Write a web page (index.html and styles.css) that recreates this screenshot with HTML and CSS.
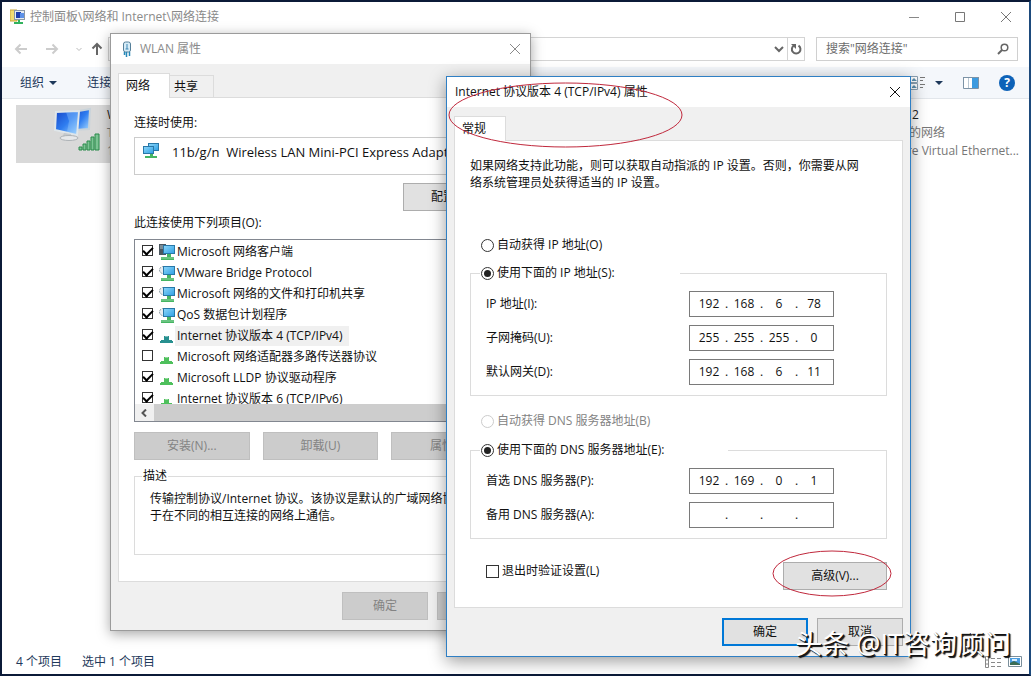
FILE: index.html
```html
<!DOCTYPE html>
<html lang="zh-CN">
<head>
<meta charset="UTF-8" />
<meta name="viewport" content="width=device-width, initial-scale=1" />
<title>网络连接</title>
<link rel="stylesheet" href="styles.css">
</head>
<body>
  <svg class="sprite" aria-hidden="true">
    <defs>
      <linearGradient id="screen" x1="0" y1="0" x2="1" y2="1">
        <stop offset="0" stop-color="#8fd8fb" />
        <stop offset="1" stop-color="#2d9fe3" />
      </linearGradient>
      <linearGradient id="blue" x1="0" y1="0" x2="1" y2="1">
        <stop offset="0" stop-color="#1746c8" />
        <stop offset=".5" stop-color="#2f7df0" />
        <stop offset="1" stop-color="#a9dcff" />
      </linearGradient>
    </defs>
    <symbol id="client" viewBox="0 0 16 16">
      <rect x="0" y="0" width="7" height="11" fill="#4a565e" />
      <path d="M1 2h3M1 4h3" stroke="#a9c3cf" />
      <rect x="4.5" y="1.5" width="11" height="8" fill="url(#screen)" stroke="#2878a8" />
      <path d="M8 10h4v3h3v3H2v-3h6z" fill="#45b562" />
      <path d="M2 14h13" stroke="#8fd3a0" />
    </symbol>
    <symbol id="service" viewBox="0 0 16 16">
      <circle cx="4" cy="5" r="3.5" fill="#e8edf0" stroke="#8c9aa3" stroke-dasharray="2 1" />
      <rect x="4.5" y="1.5" width="11" height="8" fill="url(#screen)" stroke="#2878a8" />
      <path d="M8 10h4v3h3v3H2v-3h6z" fill="#45b562" />
      <path d="M2 14h13" stroke="#8fd3a0" />
    </symbol>
    <symbol id="protocol" viewBox="0 0 16 16">
      <path d="M5 8h5v4h3v3H2v-3h3z" fill="currentColor" />
      <path d="M1 14h13" stroke="currentColor" stroke-width="2" />
      <path d="M6 8.500h3" stroke="#fff" stroke-opacity=".4" />
    </symbol>
    <symbol id="cross" viewBox="0 0 12 12">
      <path d="M1 1l10 10M11 1L1 11" fill="none" stroke="currentColor" />
    </symbol>
    <symbol id="monitors" viewBox="0 0 48 46">
      <path d="M20 6l17-3-1 20-14 1z" fill="url(#blue)" stroke="#c9d3da" stroke-width="2" />
      <path d="M3 6l23-1-2 24-22-5z" fill="url(#blue)" stroke="#dfe6ea" stroke-width="2" />
      <path d="M13 6l3 9-2 11 9 2 2-22z" fill="#9fd0ff" fill-opacity=".35" />
      <path d="M11 27l7 1v4H9z" fill="#c3c8cc" />
      <ellipse cx="16" cy="32" rx="9" ry="2.500" fill="#e6e8ea" stroke="#aeb3b7" />
      <path d="M26 41h3v3h-3zM30 38h3v6h-3zM34 35h3v9h-3zM38 31h3v13h-3zM42 28h4v16h-4z" fill="#7cc494" stroke="#2b8a4b" />
    </symbol>
  </svg>

  <main class="explorer">
    <header class="titlebar">
      <svg class="icon" viewBox="0 0 16 16">
        <path d="M0 1h7v11H0z" fill="#f2dc72" stroke="#c9a63a" />
        <rect x="4.500" y="1.500" width="10" height="9" fill="#e6edf2" stroke="#8c98a5" />
        <path d="M6 3h5v6H6z" fill="#1f3fae" /><path d="M10 4h4v5h-4z" fill="#5d91e8" />
        <path d="M8 11h2v2h3v2H4v-2h4z" fill="#31b35d" />
      </svg>
      <span class="caption">控制面板\网络和 Internet\网络连接</span>
      <div class="window-buttons">
        <button type="button" aria-label="最小化"><svg viewBox="0 0 12 12"><path d="M1 6.500h10" stroke="#888" /></svg></button>
        <button type="button" aria-label="最大化"><svg viewBox="0 0 12 12"><path d="M1.500 1.500h9v9h-9z" fill="none" stroke="#777" /></svg></button>
        <button type="button" aria-label="关闭"><svg><use href="#cross" /></svg></button>
      </div>
    </header>

    <nav class="navbar">
      <div class="history">
        <button type="button" aria-label="后退"><svg class="icon light" viewBox="0 0 16 16"><path d="M14 8H3M7.500 3.500L3 8l4.500 4.500" /></svg></button>
        <button type="button" aria-label="前进"><svg class="icon light" viewBox="0 0 16 16"><path d="M2 8h11M8.500 3.500L13 8l-4.500 4.500" /></svg></button>
        <button type="button" class="narrow" aria-label="最近位置"><svg viewBox="0 0 8 8"><path d="M1.500 3L4 5.500 6.500 3" fill="none" stroke="#bbb" /></svg></button>
        <button type="button" aria-label="上移"><svg class="icon dark" viewBox="0 0 16 16"><path d="M8 14V3M3.500 7.500L8 3l4.500 4.500" /></svg></button>
      </div>
      <div class="address">
        <button type="button" aria-label="以前的位置"><svg viewBox="0 0 12 12"><path d="M2 4l4 4 4-4" fill="none" stroke="#666" stroke-width="2" /></svg></button>
        <button type="button" class="refresh" aria-label="刷新"><svg viewBox="0 0 12 12"><path d="M4 2.500A4.300 4.300 0 1 0 8.500 2.600" fill="none" stroke="#666" stroke-width="2" /><path d="M1 1h5v5z" fill="#666" /></svg></button>
      </div>
      <div class="search">
        <input type="text" aria-label="搜索" placeholder='搜索"网络连接"'>
        <svg viewBox="0 0 12 12"><circle cx="7.500" cy="4.500" r="3.300" fill="none" stroke="#666" stroke-width="1.500" /><path d="M5 7L1 11" stroke="#666" stroke-width="2" /></svg>
      </div>
    </nav>

    <div class="toolbar">
      <button type="button">组织 <svg class="caret" viewBox="0 0 8 4"><path d="M0 0h8L4 4z" /></svg></button>
      <button type="button">连接到</button>
      <div class="tools">
        <button type="button" aria-label="更改视图">
          <svg class="icon" viewBox="0 0 16 16"><path d="M.5 1.500h7v6h-7zM.5 8.500h7v6h-7z" fill="#fff" stroke="#8aa0b2" /><path d="M2 5l2-2 3 3H2zM2 12l2-2 3 3H2z" fill="#5c8fae" /><path d="M10 2.500h5M10 5.500h3M10 9.500h5M10 12.500h3" stroke="#777" /></svg>
          <svg class="caret" viewBox="0 0 8 4"><path d="M0 0h8L4 4z" /></svg>
        </button>
        <button type="button" aria-label="预览窗格"><svg class="icon" viewBox="0 0 16 16"><path d="M.5 2.500h15v11H.5z" fill="#fff" stroke="#7c93a6" /><path d="M5.500 3v10" stroke="#b9c7d2" /><path d="M9 3h6v10H9z" fill="#3d9be0" /><path d="M0 2.500h16" stroke="#7c93a6" /></svg></button>
        <button type="button" class="help" aria-label="帮助">?</button>
      </div>
    </div>

    <section class="connections">
      <article class="connection selected">
        <svg><use href="#monitors" /></svg>
        <div><strong>WLAN</strong><span>TP-LINK</span><span>11b/g/n</span></div>
      </article>
      <article class="connection">
        <svg><use href="#monitors" /></svg>
        <div><strong>以太网 2</strong><span>未识别的网络</span><span>VMware Virtual Ethernet...</span></div>
      </article>
    </section>

    <footer class="statusbar">
      <span>4 个项目</span>
      <span>选中 1 个项目</span>
      <svg class="icon details" viewBox="0 0 16 16"><path d="M.5 2.500h3v11h-3zM.5 6h3M.5 10h3" fill="none" stroke="#888" /><path d="M6 4.500h4M12 4.500h4M6 8.500h4M12 8.500h4M6 12.500h4M12 12.500h4" stroke="#888" /></svg>
      <svg class="icon" viewBox="0 0 16 16"><path d="M1.500 2.500h13v10h-13z" fill="#fff" stroke="#7b8f9b" /><path d="M3 4h10v7H3z" fill="#4a9de0" /><path d="M3 11V9l4-2 6 3v1z" fill="#3b6d55" /><path d="M5 6h5" stroke="#d9eeff" stroke-width="2" /></svg>
    </footer>
  </main>

  <section class="window wlan">
    <header class="window-title">
      <svg class="icon" viewBox="0 0 16 16"><rect x="4.500" y="1" width="7" height="10" rx="2" fill="#d7ecf7" stroke="#557f99" /><path d="M8 3v5M6.500 8h3" stroke="#3c87b5" /><path d="M5.500 11v3M7.500 11v5M10.500 11v4" fill="none" stroke="#2688b8" stroke-width="1.500" /></svg>
      <h2>WLAN 属性</h2>
      <button type="button" aria-label="关闭"><svg><use href="#cross" /></svg></button>
    </header>
    <div class="tabs">
      <button type="button" class="tab active">网络</button>
      <button type="button" class="tab">共享</button>
    </div>
    <form class="panel">
      <p>连接时使用:</p>
      <div class="adapter">
        <svg class="icon" viewBox="0 0 16 16"><rect x="5.500" y=".5" width="10" height="7" fill="url(#screen)" stroke="#2878a8" /><rect x=".5" y="3.500" width="10" height="7" fill="url(#screen)" stroke="#2878a8" /><path d="M7 11h3v2h4v2H2v-2h5z" fill="#45b562" /></svg>
        <span>11b/g/n&nbsp; Wireless LAN Mini-PCI Express Adapter</span>
      </div>
      <button type="button" class="button configure">配置(C)...</button>
      <p>此连接使用下列项目(O):</p>
      <div class="component-list">
        <div class="components">
          <label><input type="checkbox" checked><svg class="icon"><use href="#client" /></svg><span>Microsoft 网络客户端</span></label>
          <label><input type="checkbox" checked><svg class="icon"><use href="#service" /></svg><span>VMware Bridge Protocol</span></label>
          <label><input type="checkbox" checked><svg class="icon"><use href="#service" /></svg><span>Microsoft 网络的文件和打印机共享</span></label>
          <label><input type="checkbox" checked><svg class="icon"><use href="#service" /></svg><span>QoS 数据包计划程序</span></label>
          <label class="current"><input type="checkbox" checked><svg class="icon"><use href="#protocol" /></svg><span>Internet 协议版本 4 (TCP/IPv4)</span></label>
          <label><input type="checkbox"><svg class="icon"><use href="#protocol" /></svg><span>Microsoft 网络适配器多路传送器协议</span></label>
          <label><input type="checkbox" checked><svg class="icon"><use href="#protocol" /></svg><span>Microsoft LLDP 协议驱动程序</span></label>
          <label><input type="checkbox" checked><svg class="icon"><use href="#protocol" /></svg><span>Internet 协议版本 6 (TCP/IPv6)</span></label>
        </div>
        <div class="scrollbar"><svg viewBox="0 0 8 8"><path d="M6 .5L2.500 4 6 7.500" fill="none" stroke="#555" stroke-width="2" /></svg><i></i></div>
      </div>
      <div class="actions">
        <button type="button" class="button" disabled>安装(N)...</button>
        <button type="button" class="button" disabled>卸载(U)</button>
        <button type="button" class="button" disabled>属性(R)</button>
      </div>
      <fieldset class="description">
        <legend>描述</legend>
        <p>传输控制协议/Internet 协议。该协议是默认的广域网络协议，用<br>于在不同的相互连接的网络上通信。</p>
      </fieldset>
    </form>
    <div class="dialog-buttons">
      <button type="button" class="button" disabled>确定</button>
      <button type="button" class="button" disabled>取消</button>
    </div>
  </section>

  <section class="window ipv4">
    <header class="window-title">
      <h2>Internet 协议版本 4 (TCP/IPv4) 属性</h2>
      <button type="button" aria-label="关闭"><svg><use href="#cross" /></svg></button>
    </header>
    <div class="tabs">
      <button type="button" class="tab active">常规</button>
    </div>
    <form class="panel">
      <p class="intro">如果网络支持此功能，则可以获取自动指派的 IP 设置。否则，你需要从网<br>络系统管理员处获得适当的 IP 设置。</p>

      <label class="choice"><input type="radio" name="ip"><span>自动获得 IP 地址(O)</span></label>
      <fieldset class="addresses">
        <legend><label><input type="radio" name="ip" checked><span>使用下面的 IP 地址(S):</span></label></legend>
        <div class="row">
          <label for="ip1">IP 地址(I):</label>
          <div class="octets"><input type="text" id="ip1" value="192"><b>.</b><input type="text" aria-label="IP 地址 2" value="168"><b>.</b><input type="text" aria-label="IP 地址 3" value="6"><b>.</b><input type="text" aria-label="IP 地址 4" value="78"></div>
        </div>
        <div class="row">
          <label for="mask1">子网掩码(U):</label>
          <div class="octets"><input type="text" id="mask1" value="255"><b>.</b><input type="text" aria-label="子网掩码 2" value="255"><b>.</b><input type="text" aria-label="子网掩码 3" value="255"><b>.</b><input type="text" aria-label="子网掩码 4" value="0"></div>
        </div>
        <div class="row">
          <label for="gate1">默认网关(D):</label>
          <div class="octets"><input type="text" id="gate1" value="192"><b>.</b><input type="text" aria-label="默认网关 2" value="168"><b>.</b><input type="text" aria-label="默认网关 3" value="6"><b>.</b><input type="text" aria-label="默认网关 4" value="11"></div>
        </div>
      </fieldset>

      <label class="choice second"><input type="radio" name="dns" disabled><span>自动获得 DNS 服务器地址(B)</span></label>
      <fieldset class="addresses dns">
        <legend><label><input type="radio" name="dns" checked><span>使用下面的 DNS 服务器地址(E):</span></label></legend>
        <div class="row">
          <label for="dns1">首选 DNS 服务器(P):</label>
          <div class="octets"><input type="text" id="dns1" value="192"><b>.</b><input type="text" aria-label="首选 DNS 2" value="169"><b>.</b><input type="text" aria-label="首选 DNS 3" value="0"><b>.</b><input type="text" aria-label="首选 DNS 4" value="1"></div>
        </div>
        <div class="row">
          <label for="alt1">备用 DNS 服务器(A):</label>
          <div class="octets"><input type="text" id="alt1"><b>.</b><input type="text" aria-label="备用 DNS 2"><b>.</b><input type="text" aria-label="备用 DNS 3"><b>.</b><input type="text" aria-label="备用 DNS 4"></div>
        </div>
      </fieldset>

      <div class="advanced">
        <label><input type="checkbox"><span>退出时验证设置(L)</span></label>
        <div class="marked">
          <button type="button" class="button">高级(V)...</button>
          <svg class="ring small" viewBox="0 0 120 47"><ellipse cx="60" cy="23.500" rx="59" ry="22.500" /></svg>
        </div>
      </div>
    </form>
    <div class="dialog-buttons">
      <button type="button" class="button default">确定</button>
      <button type="button" class="button">取消</button>
    </div>
    <svg class="ring large" viewBox="0 0 235 66"><ellipse cx="117.500" cy="33" rx="116.500" ry="32" /></svg>
  </section>

  <div class="watermark">头条 @IT咨询顾问</div>
</body>
</html>
```
FILE: styles.css
```css
* {
  box-sizing: border-box;
}
body {
  margin: 0;
  position: relative;
  font-family: "Open Sans", "Noto Sans CJK SC", sans-serif;
  font-size: 12px;
  line-height: 18px;
  color: #111;
  background: #fff;
}
p, h2 {
  margin: 0;
  font-size: 12px;
  font-weight: 400;
}
button, input {
  font: inherit;
  color: inherit;
}
button {
  padding: 0;
  border: none;
  background: none;
  white-space: nowrap;
}
svg {
  display: block;
  flex: none;
  width: 12px;
  height: 12px;
}
.sprite {
  position: absolute;
  width: 0;
  height: 0;
}
.icon {
  width: 16px;
  height: 16px;
}

/* explorer */
.explorer {
  display: flex;
  flex-direction: column;
  min-height: 100vh;
  border: 2px solid #0b1a38;
  border-right-color: #1d4a7c;
}
.titlebar {
  display: flex;
  align-items: center;
  gap: 4px;
  height: 29px;
  padding-left: 8px;
  color: #8a8a8a;
}
.window-buttons {
  display: flex;
  margin-left: auto;
}
.window-buttons button {
  display: grid;
  place-items: center;
  width: 46px;
  height: 28px;
  color: #777;
}
.navbar {
  display: flex;
  height: 36px;
  padding: 6px 11px;
}
.history {
  display: flex;
  width: 95px;
}
.history button {
  display: grid;
  place-items: center start;
  width: 31px;
}
.history .narrow {
  width: 14px;
}
.history .narrow svg {
  width: 8px;
  height: 8px;
}
.history .narrow + button {
  width: 16px;
}
.light, .dark {
  fill: none;
  stroke: #ccc;
  stroke-width: 2;
}
.dark {
  stroke: #666;
}
.address {
  display: flex;
  justify-content: flex-end;
  flex: 1;
  margin-right: 11px;
  border: 1px solid #d4d4d4;
}
.address button {
  display: grid;
  place-items: center;
  width: 17px;
}
.address .refresh {
  border-left: 1px solid #d4d4d4;
}
.search {
  display: flex;
  align-items: center;
  width: 202px;
  padding: 0 8px 0 9px;
  border: 1px solid #d0d0d0;
}
.search input {
  flex: 1;
  min-width: 0;
  padding: 0;
  border: none;
  outline: none;
  background: none;
}
.search input::placeholder {
  color: #6d6d6d;
}
.toolbar {
  display: flex;
  gap: 30px;
  height: 32px;
  padding: 0 14px 0 18px;
  background: #f4f7fb;
  border-bottom: 1px solid #e2e6eb;
  color: #1e395b;
}
.caret {
  display: inline-block;
  width: 8px;
  height: 4px;
  margin: 0 0 2px 2px;
  fill: #1e395b;
}
.tools {
  display: flex;
  align-items: center;
  gap: 20px;
  margin-left: auto;
}
.tools button {
  display: flex;
  align-items: center;
}
.tools .caret {
  margin: 0 0 0 9px;
}
.tools .help {
  justify-content: center;
  width: 16px;
  height: 16px;
  border-radius: 50%;
  background: #0d62b8;
  color: #fff;
  font-weight: 700;
}
.connections {
  display: flex;
  justify-content: space-between;
  flex: 1;
  align-items: flex-start;
  padding: 6px 10px 0 14px;
}
.connection {
  display: flex;
  gap: 6px;
  width: 250px;
  height: 58px;
  padding: 1px 0 0 37px;
  color: #777;
}
.connection:last-child {
  width: auto;
}
.connection.selected {
  background: #d9d9d9;
}
.connection svg {
  width: 48px;
  height: 46px;
}
.connection strong, .connection span {
  display: block;
  font-weight: 400;
  white-space: nowrap;
}
.connection strong {
  color: #222;
}
.statusbar {
  display: flex;
  align-items: center;
  gap: 20px;
  height: 24px;
  padding: 0 6px 0 14px;
  color: #1e395b;
}
.statusbar .details {
  margin-left: auto;
}
.statusbar .details + .icon {
  margin-left: -14px;
}

/* dialogs */
.window {
  position: absolute;
  background: #f0f0f0;
  border: 1px solid #9b9b9b;
}
.wlan {
  left: 110px;
  top: 33px;
  width: 421px;
  box-shadow: 0 3px 12px rgba(0,0,0,0.35);
}
.ipv4 {
  left: 446px;
  top: 76px;
  width: 465px;
  border-color: #2f7fc4;
  box-shadow: 0 4px 16px rgba(0,0,0,0.4);
}
.window-title {
  display: flex;
  align-items: center;
  gap: 5px;
  height: 30px;
  padding: 0 9px 0 8px;
  background: #fff;
}
.window-title button {
  margin-left: auto;
}
.wlan .window-title {
  color: #8a8a8a;
}
.tabs {
  display: flex;
  align-items: flex-end;
  height: 33px;
  padding: 0 7px;
}
.tab {
  width: 44px;
  height: 22px;
  border: 1px solid #dcdcdc;
  border-left: none;
  border-bottom: none;
  padding-left: 4px;
  text-align: left;
}
.tab.active {
  position: relative;
  width: 52px;
  height: 25px;
  margin-bottom: -1px;
  padding-left: 7px;
  border-left: 1px solid #dcdcdc;
  background: #fff;
}
.panel {
  margin: 0 7px;
  padding: 15px;
  border: 1px solid #dcdcdc;
  background: #fff;
}
.button {
  height: 28px;
  border: 1px solid #adadad;
  background: #e1e1e1;
}
.button:disabled {
  border-color: #bfbfbf;
  background: #ccc;
  color: #838383;
}
.button.default {
  border: 2px solid #0078d7;
}
.dialog-buttons {
  display: flex;
  justify-content: flex-end;
  gap: 9px;
  padding: 10px 7px;
}
.dialog-buttons .button {
  width: 86px;
}
input[type="checkbox"], input[type="radio"] {
  appearance: none;
  display: grid;
  place-items: center;
  flex: none;
  width: 13px;
  height: 13px;
  margin: 0;
  border: 1px solid #333;
  background: #fff;
}
input[type="radio"] {
  border-radius: 50%;
}
input[type="radio"]:checked::before {
  content: "";
  width: 7px;
  height: 7px;
  border-radius: 50%;
  background: #222;
}
input[type="radio"]:disabled {
  border-color: #ccc;
}
input:disabled + span {
  color: #838383;
}

/* WLAN dialog */
.wlan .panel {
  padding: 16px 15px 26px;
}
.adapter {
  display: flex;
  gap: 13px;
  height: 38px;
  margin: 5px 0 8px;
  padding: 5px 0 0 8px;
  border: 1px solid #ccc;
  font-size: 13px;
  white-space: nowrap;
}
.configure {
  display: block;
  width: 104px;
  margin: 0 0 3px auto;
}
.component-list {
  margin: 7px 0 10px;
  border: 1px solid #828790;
}
.components {
  height: 164px;
  padding-top: 1px;
  overflow: hidden;
}
.components label {
  display: flex;
  align-items: center;
  height: 21px;
  padding-left: 7px;
}
.components input {
  width: 11px;
  height: 11px;
  margin: 0 6px 2px 0;
}
.components input:checked::before {
  content: "";
  width: 8px;
  height: 4px;
  margin-bottom: 2px;
  border: solid #000;
  border-width: 0 0 2px 2px;
  transform: rotate(-45deg);
}
.components .icon {
  color: #4ec05c;
}
.components .current .icon {
  color: #27908f;
}
.components span {
  padding: 1px 6px 1px 2px;
}
.components .current span {
  background: #f0f0f0;
}
.scrollbar {
  display: flex;
  align-items: center;
  height: 17px;
  background: #f0f0f0;
}
.scrollbar svg {
  width: 8px;
  height: 8px;
  margin: 0 6px 0 5px;
}
.scrollbar i {
  flex: 1;
  height: 17px;
  background: #cdcdcd;
}
.actions {
  display: grid;
  grid-template-columns: repeat(3, 1fr);
  gap: 13px;
}
fieldset {
  margin: 0;
  padding: 0;
  border: 1px solid #dcdcdc;
  min-width: 0;
}
.description {
  height: 88px;
  margin-top: 7px;
}
.description legend {
  margin-left: 7px;
  padding: 0 1px;
}
.description p {
  padding: 5px 0 0 15px;
  line-height: 17px;
  white-space: nowrap;
}

/* IPv4 dialog */
.ipv4 .panel {
  padding-bottom: 17px;
}
.intro {
  padding-top: 1px;
  line-height: 17px;
  white-space: nowrap;
}
.choice, .addresses legend label {
  display: flex;
  align-items: center;
  gap: 3px;
}
.choice {
  margin: 45px 0 10px 11px;
}
.choice.second {
  margin: 16px 0 11px 11px;
}
.addresses {
  display: grid;
  gap: 8px;
  padding: 9px 0 10px 15px;
}
.addresses legend {
  width: 200px;
  margin-left: -6px;
  padding-left: 1px;
}
.addresses.dns legend {
  width: 248px;
}
.row {
  display: grid;
  grid-template-columns: 203px 145px;
  align-items: center;
}
.octets {
  display: flex;
  height: 26px;
  padding-left: 5px;
  border: 1px solid #7a7a7a;
}
.octets input {
  width: 28px;
  padding: 0;
  border: none;
  outline: none;
  background: none;
  text-align: center;
}
.octets b {
  width: 7px;
  text-align: center;
  font-weight: 400;
  line-height: 24px;
}
.advanced {
  display: flex;
  align-items: flex-start;
  justify-content: space-between;
  margin-top: 23px;
  padding-left: 16px;
}
.advanced label {
  display: flex;
  align-items: center;
  gap: 3px;
}
.marked {
  position: relative;
}
.marked .button {
  width: 104px;
}
.ring {
  position: absolute;
  fill: none;
  stroke: #c0283c;
  pointer-events: none;
}
.ring.small {
  left: -11px;
  top: -12px;
  width: 120px;
  height: 47px;
}
.ring.large {
  left: 1px;
  top: 5px;
  width: 235px;
  height: 66px;
}

.watermark {
  position: absolute;
  right: 20px;
  bottom: 14px;
  font-size: 27px;
  line-height: 36px;
  color: #fff;
  text-shadow: 1px 1px 0 #111, 2px 2px 1px #111;
}
```
